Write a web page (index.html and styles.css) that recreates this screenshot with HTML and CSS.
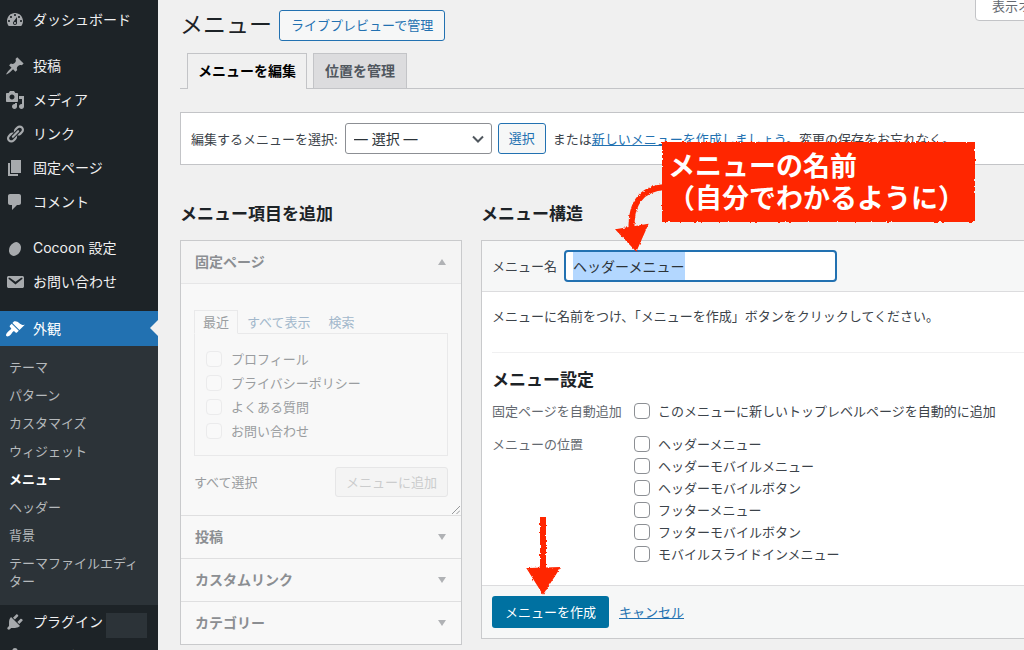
FILE: index.html
```html
<!DOCTYPE html>
<html lang="ja">
<head>
<meta charset="utf-8">
<title>メニュー</title>
<link rel="stylesheet" href="styles.css">
</head>
<body>
<div class="app">
  <nav class="sidebar" aria-label="管理メニュー">
    <a class="item" href="#"><svg class="icon" viewBox="0 0 20 20"><path fill-rule="evenodd" d="M3.76 16h12.48c1.1-1.37 1.76-3.11 1.76-5 0-4.42-3.58-8-8-8s-8 3.58-8 8c0 1.89.66 3.63 1.76 5zM10 4c.55 0 1 .45 1 1s-.45 1-1 1-1-.45-1-1 .45-1 1-1zM6 6c.55 0 1 .45 1 1s-.45 1-1 1-1-.45-1-1 .45-1 1-1zm8 0c.55 0 1 .45 1 1s-.45 1-1 1-1-.45-1-1 .45-1 1-1zm-5.37 5.55L12 7v6c0 1.1-.9 2-2 2s-2-.9-2-2c0-.57.24-1.08.63-1.45zM4 10c.55 0 1 .45 1 1s-.45 1-1 1-1-.45-1-1 .45-1 1-1zm12 0c.55 0 1 .45 1 1s-.45 1-1 1-1-.45-1-1 .45-1 1-1zm-5 3c0-.55-.45-1-1-1s-1 .45-1 1 .45 1 1 1 1-.45 1-1z"/></svg>ダッシュボード</a>
    <a class="item spaced" href="#"><svg class="icon" viewBox="0 0 20 20"><path d="M10.44 3.02l1.82-1.82 6.36 6.35-1.83 1.82c-1.05-.68-2.48-.57-3.41.36l-.75.75c-.92.93-1.04 2.35-.35 3.41l-1.83 1.82-2.41-2.41-2.8 2.79c-.42.42-3.38 2.71-3.8 2.29s1.86-3.39 2.28-3.81l2.79-2.79L4.1 9.36l1.83-1.82c1.05.69 2.48.57 3.4-.36l.75-.75c.93-.92 1.05-2.35.36-3.41z"/></svg>投稿</a>
    <a class="item" href="#"><svg class="icon" viewBox="0 0 20 20"><path fill-rule="evenodd" d="M13 11V4c0-.55-.45-1-1-1h-1.67L9 1H5L3.67 3H2c-.55 0-1 .45-1 1v7c0 .55.45 1 1 1h10c.55 0 1-.45 1-1zM7 4.5c1.38 0 2.5 1.12 2.5 2.5S8.38 9.5 7 9.5 4.5 8.38 4.5 7 5.62 4.5 7 4.5zM14 6h5v10.5c0 1.38-1.12 2.5-2.5 2.5S14 17.88 14 16.5s1.12-2.5 2.5-2.5c.17 0 .34.02.5.05V9h-3V6zm-4 8.05V13h2v3.5c0 1.38-1.12 2.5-2.5 2.5S7 17.88 7 16.5 8.12 14 9.5 14c.17 0 .34.02.5.05z"/></svg>メディア</a>
    <a class="item" href="#"><svg class="icon" viewBox="0 0 20 20"><path d="M17.74 2.76c1.68 1.69 1.68 4.41 0 6.1l-1.53 1.52c-1.12 1.12-2.7 1.47-4.14 1.09l2.62-2.61.76-.77.76-.76c.84-.84.84-2.2 0-3.04-.84-.85-2.2-.85-3.04 0l-.77.76-3.38 3.38c-.37-1.44-.02-3.02 1.1-4.14l1.52-1.53c1.69-1.68 4.42-1.68 6.1 0zM8.59 13.43l5.34-5.34c.42-.42.42-1.1 0-1.52-.44-.43-1.13-.39-1.53 0l-5.33 5.34c-.42.42-.42 1.1 0 1.52.44.43 1.13.39 1.52 0zm-.76 2.29l4.14-4.15c.38 1.44.03 3.02-1.09 4.14l-1.52 1.53c-1.69 1.68-4.41 1.68-6.1 0-1.68-1.68-1.68-4.42 0-6.1l1.53-1.52c1.12-1.12 2.7-1.47 4.14-1.1l-4.14 4.15c-.85.84-.85 2.2 0 3.05.84.84 2.2.84 3.04 0z"/></svg>リンク</a>
    <a class="item" href="#"><svg class="icon" viewBox="0 0 20 20"><path d="M6 15V2h10v13H6zm-1 1h8v2H3V5h2v11z"/></svg>固定ページ</a>
    <a class="item" href="#"><svg class="icon" viewBox="0 0 20 20"><path d="M5 2h9c1.1 0 2 .9 2 2v7c0 1.1-.9 2-2 2h-2l-5 5v-5H5c-1.1 0-2-.9-2-2V4c0-1.1.9-2 2-2z"/></svg>コメント</a>
    <a class="item spaced" href="#"><svg class="icon" viewBox="0 0 20 20"><ellipse cx="10" cy="11" rx="5.6" ry="7.2" transform="rotate(28 10 11)"/></svg>Cocoon 設定</a>
    <a class="item" href="#"><svg class="icon" viewBox="0 0 20 20"><path fill-rule="evenodd" d="M3.87 4h13.25C18.37 4 19 4.59 19 5.79v8.42c0 1.19-.63 1.79-1.88 1.79H3.87c-1.25 0-1.88-.6-1.88-1.79V5.79c0-1.2.63-1.79 1.88-1.79zm6.62 8.6l6.74-5.53c.24-.2.43-.66.13-1.07-.29-.41-.82-.42-1.17-.17l-5.7 3.86L4.8 5.83c-.35-.25-.88-.24-1.17.17-.3.41-.11.87.13 1.07z"/></svg>お問い合わせ</a>
    <a class="item spaced current" href="#"><svg class="icon" viewBox="0 0 20 20"><path d="M14.48 11.06L7.41 3.99l1.5-1.5c.5-.56 2.3-.47 3.51.32 1.21.8 1.43 1.28 2.91 2.1 1.18.64 2.45 1.26 4.45.85zm-.71.71L6.7 4.7 4.93 6.47c-.39.39-.39 1.02 0 1.41l1.06 1.06c.39.39.39 1.03 0 1.42-.6.6-1.43 1.11-2.21 1.69-.35.26-.7.53-1.01.84C1.43 14.23.4 16.08 1.4 17.07c.99 1 2.84-.03 4.18-1.36.31-.31.58-.66.85-1.02.57-.78 1.08-1.61 1.69-2.21.39-.39 1.02-.39 1.41 0l1.06 1.06c.39.39 1.02.39 1.41 0z"/></svg>外観</a>
    <div class="submenu">
      <a href="#">テーマ</a>
      <a href="#">パターン</a>
      <a href="#">カスタマイズ</a>
      <a href="#">ウィジェット</a>
      <a href="#" class="selected">メニュー</a>
      <a href="#">ヘッダー</a>
      <a href="#">背景</a>
      <a href="#">テーマファイルエディター</a>
    </div>
    <a class="item" href="#"><svg class="icon" viewBox="0 0 20 20"><path d="M13.11 4.36L9.87 7.6 8 5.73l3.24-3.24c.35-.34 1.05-.2 1.56.32.52.51.66 1.21.31 1.55zm-8 1.77l.91-1.12 9.01 9.01-1.19.84c-.71.71-2.63 1.16-3.82 1.16H6.14L4.9 17.26c-.59.59-1.54.59-2.12 0-.59-.58-.59-1.53 0-2.12l1.24-1.24v-3.88c0-1.13.4-3.19 1.09-3.89zm7.26 3.97l3.24-3.24c.34-.35 1.04-.21 1.55.31.52.51.66 1.21.31 1.55l-3.24 3.25z"/></svg>プラグイン<span class="count"></span></a>
    <a class="item" href="#"><svg class="icon" viewBox="0 0 20 20"><path d="M10 9.25c-2.27 0-2.73-3.44-2.73-3.44C7 4.02 7.82 2 9.97 2c2.16 0 2.98 2.02 2.71 3.81 0 0-.41 3.44-2.68 3.44zm0 2.57L12.72 10c2.39 0 4.52 2.33 4.52 4.53v2.49s-3.65 1.13-7.24 1.13c-3.65 0-7.24-1.13-7.24-1.13v-2.49c0-2.25 1.94-4.48 4.47-4.48z"/></svg>ユーザー</a>
  </nav>

  <main class="main">
    <button class="screen-options" type="button">表示オプション</button>
    <header class="title-row">
      <h1>メニュー</h1>
      <a class="button" href="#">ライブプレビューで管理</a>
    </header>
    <nav class="tabs" aria-label="表示の切り替え">
      <a class="tab active" href="#">メニューを編集</a>
      <a class="tab" href="#">位置を管理</a>
    </nav>

    <form class="manage">
      <label for="menu-select">編集するメニューを選択:</label>
      <div class="select-wrap">
        <select id="menu-select"><option>— 選択 —</option></select>
        <svg class="chevron" viewBox="0 0 12 8"><path d="M1 1.5l5 5 5-5"/></svg>
      </div>
      <button class="button" type="button">選択</button>
      <span class="hint">または<a href="#">新しいメニューを作成しましょう</a>。変更の保存をお忘れなく。</span>
    </form>

    <div class="columns">
      <section class="add">
        <h2>メニュー項目を追加</h2>
        <div class="accordion">
          <button class="acc-head open" type="button">固定ページ<svg viewBox="0 0 8 6"><path d="M4 0l4 6H0z"/></svg></button>
          <div class="acc-body">
            <div class="mini-tabs">
              <a class="on" href="#">最近</a><a href="#">すべて表示</a><a href="#">検索</a>
            </div>
            <div class="panel">
              <label><input type="checkbox" disabled>プロフィール</label>
              <label><input type="checkbox" disabled>プライバシーポリシー</label>
              <label><input type="checkbox" disabled>よくある質問</label>
              <label><input type="checkbox" disabled>お問い合わせ</label>
            </div>
            <div class="panel-foot">
              <span>すべて選択</span>
              <button type="button" disabled>メニューに追加</button>
            </div>
            <svg class="grip" viewBox="0 0 8 8"><path d="M0 8L8 0M4.5 8L8 4.5"/></svg>
          </div>
          <button class="acc-head" type="button">投稿<svg viewBox="0 0 8 6"><path d="M4 6L0 0h8z"/></svg></button>
          <button class="acc-head" type="button">カスタムリンク<svg viewBox="0 0 8 6"><path d="M4 6L0 0h8z"/></svg></button>
          <button class="acc-head" type="button">カテゴリー<svg viewBox="0 0 8 6"><path d="M4 6L0 0h8z"/></svg></button>
        </div>
      </section>

      <section class="structure">
        <h2>メニュー構造</h2>
        <form class="editor">
          <div class="editor-head">
            <label for="menu-name">メニュー名</label>
            <input id="menu-name" class="name" type="text" value="ヘッダーメニュー">
          </div>
          <div class="editor-body">
            <p>メニューに名前をつけ、「メニューを作成」ボタンをクリックしてください。</p>
            <div class="settings">
              <h2>メニュー設定</h2>
              <div class="setting">
                <span class="legend">固定ページを自動追加</span>
                <div class="checks"><label><input type="checkbox">このメニューに新しいトップレベルページを自動的に追加</label></div>
              </div>
              <div class="setting">
                <span class="legend">メニューの位置</span>
                <div class="checks">
                  <label><input type="checkbox">ヘッダーメニュー</label>
                  <label><input type="checkbox">ヘッダーモバイルメニュー</label>
                  <label><input type="checkbox">ヘッダーモバイルボタン</label>
                  <label><input type="checkbox">フッターメニュー</label>
                  <label><input type="checkbox">フッターモバイルボタン</label>
                  <label><input type="checkbox">モバイルスライドインメニュー</label>
                </div>
              </div>
            </div>
          </div>
          <div class="editor-foot">
            <button class="primary" type="button">メニューを作成</button>
            <a href="#">キャンセル</a>
          </div>
        </form>
      </section>
    </div>
  </main>

  <svg class="arrows" viewBox="0 0 1024 650" aria-hidden="true">
    <defs>
      <filter id="rough" x="-5%" y="-5%" width="110%" height="110%">
        <feTurbulence type="fractalNoise" baseFrequency="0.35" numOctaves="2" seed="4" result="n"/>
        <feDisplacementMap in="SourceGraphic" in2="n" scale="3" xChannelSelector="R" yChannelSelector="G"/>
      </filter>
    </defs>
    <g filter="url(#rough)">
      <path class="stroke" d="M666 187C640 188 629 205 632 236"/>
      <path class="head" d="M617 230L647 225L636 250Z"/>
      <path class="stroke" d="M543 517V572"/>
      <path class="head" d="M528 569L559 568L543 593Z"/>
    </g>
  </svg>
  <div class="callout"><span>メニューの名前<br>（自分でわかるように）</span></div>
</div>
</body>
</html>
```

FILE: styles.css
```css
* { box-sizing: border-box; }

body {
  margin: 0;
  background: #f0f0f0;
  color: #3c434a;
  font: 13px/18px Inter, "Noto Sans CJK JP", sans-serif;
}

a { color: #2271b1; }
button, input, select { font: inherit; color: inherit; }
h1, h2, p { margin: 0; }
h1 { font-size: 23px; line-height: 32px; font-weight: 400; color: #1d2327; }
h2 { font-size: 17px; line-height: 24px; font-weight: 700; color: #1d2327; }

.app {
  position: relative;
  display: flex;
  height: 100vh;
  overflow: hidden;
}

/* Sidebar */
.sidebar {
  flex: 0 0 158px;
  padding-top: 3px;
  background: #1d2327;
}
.item {
  position: relative;
  display: flex;
  align-items: center;
  gap: 8px;
  height: 34px;
  padding-left: 5px;
  color: #f0f0f1;
  font-size: 14px;
  text-decoration: none;
}
.item.spaced { margin-top: 12px; }
.icon { width: 20px; height: 20px; fill: #a7aaad; }
.item.current { height: 35px; background: #2271b1; color: #fff; }
.item.current .icon { fill: #fff; }
.item.current::after {
  content: "";
  position: absolute;
  right: 0;
  top: 9px;
  border: 8px solid transparent;
  border-left: 0;
  border-right-color: #f0f0f0;
}
.submenu { padding: 7px 0 10px; background: #2c3338; }
.submenu a {
  display: block;
  padding: 5px 16px 5px 9px;
  color: #b5b9bc;
  text-decoration: none;
}
.submenu .selected { color: #fff; font-weight: 700; }
.count { width: 41px; height: 25px; margin: 6px 0 0 -5px; background: #2c3338; }

/* Main column */
.main {
  position: relative;
  flex: 1;
  min-width: 0;
  padding: 9px 0 0 22px;
}
.screen-options {
  position: absolute;
  top: -9px;
  right: -76px;
  height: 30px;
  padding: 0 16px;
  border: 1px solid #c3c4c7;
  border-radius: 0 0 4px 4px;
  background: #fff;
  color: #646970;
}
.title-row { display: flex; align-items: center; gap: 7px; }
.button {
  height: 31px;
  padding: 0 10px;
  border: 1px solid #2271b1;
  border-radius: 3px;
  background: #f6f7f7;
  color: #2271b1;
  line-height: 29px;
  text-decoration: none;
}
.title-row .button { padding: 0 11px; }
.tabs {
  display: flex;
  gap: 6px;
  margin-top: 12px;
  padding-left: 7px;
  border-bottom: 1px solid #c3c4c7;
}
.tab {
  padding: 5px 11px;
  border: 1px solid #c3c4c7;
  border-bottom: 0;
  background: #dcdcde;
  color: #50575e;
  font-size: 14px;
  line-height: 24px;
  font-weight: 700;
  text-decoration: none;
}
.tab.active { margin-bottom: -1px; padding: 5px 10px 6px; background: #f0f0f0; color: #000; }

.manage {
  display: flex;
  align-items: center;
  margin-top: 23px;
  height: 53px;
  padding-left: 10px;
  border: 1px solid #c3c4c7;
  border-right: 0;
  background: #fff;
  white-space: nowrap;
}
.select-wrap { position: relative; margin: 0 6px 0 7px; }
.select-wrap select {
  appearance: none;
  width: 147px;
  height: 31px;
  padding: 0 24px 0 8px;
  border: 1px solid #8c8f94;
  border-radius: 3px;
  background: #fff;
  color: #2c3338;
  font-size: 14px;
}
.chevron {
  position: absolute;
  right: 8px;
  top: 12px;
  width: 12px;
  height: 8px;
  fill: none;
  stroke: #50575e;
  stroke-width: 2;
  pointer-events: none;
}
.hint { margin-left: 7px; }

.columns {
  display: grid;
  grid-template-columns: 282px 1fr;
  gap: 19px;
  margin-top: 37px;
}
.columns section > h2 { margin-bottom: 14px; }

/* Accordion of items that can be added */
.accordion {
  border: 1px solid #c9cacc;
  background: #f8f8f8;
  color: #9a9da0;
}
.acc-head {
  display: flex;
  align-items: center;
  justify-content: space-between;
  width: 100%;
  height: 43px;
  padding: 0 15px 0 14px;
  border: 0;
  border-top: 1px solid #dfdfe0;
  background: none;
  color: #8b8e92;
  font-size: 14px;
  font-weight: 700;
}
.acc-head.open {
  border-top: 0;
  border-bottom: 1px solid #e6e6e7;
  background: #f4f4f4;
}
.acc-head svg { width: 8px; height: 6px; fill: #b0b2b5; }
.acc-body { position: relative; padding: 26px 13px 18px; }
.mini-tabs { display: flex; margin-bottom: -1px; }
.mini-tabs a {
  padding: 2px 8px;
  border: 1px solid transparent;
  color: #a3b8cc;
  text-decoration: none;
}
.mini-tabs a.on {
  border-color: #e9e9ea;
  border-bottom-color: #f8f8f8;
  background: #f8f8f8;
  color: #9a9da0;
  position: relative;
}
.panel {
  padding: 13px 11px 12px;
  border: 1px solid #e9e9ea;
}
.panel label { display: flex; align-items: center; gap: 9px; height: 24px; }
.panel-foot {
  display: flex;
  align-items: center;
  justify-content: space-between;
  margin-top: 11px;
}
.panel-foot button {
  height: 30px;
  padding: 0 10px;
  border: 1px solid #e6e6e7;
  border-radius: 3px;
  background: #f4f4f4;
  color: #cbcccd;
}
.grip {
  position: absolute;
  right: 1px;
  bottom: 1px;
  width: 8px;
  height: 8px;
  stroke: #97999b;
  stroke-width: 1;
}

input[type="checkbox"] {
  appearance: none;
  flex: none;
  width: 16px;
  height: 16px;
  margin: 0;
  border: 1px solid #8c8f94;
  border-radius: 4px;
  background: #fff;
}
.panel input[type="checkbox"] { border-color: #ebebec; background: #f9f9f9; }

/* Menu editor */
.editor {
  border: 1px solid #c9cacc;
  border-right: 0;
  background: #fff;
}
.editor-head, .editor-foot {
  display: flex;
  align-items: center;
  gap: 7px;
  height: 51px;
  padding-left: 10px;
  background: #f6f7f7;
}
.editor-head { border-bottom: 1px solid #dcdcde; }
.name {
  width: 273px;
  height: 32px;
  padding: 0 7px;
  border: 2px solid #2271b1;
  border-radius: 4px;
  outline: 0;
  background: #fff linear-gradient(#b3d7ff, #b3d7ff) 7px 0 / 112px 100% no-repeat;
  color: #2c3338;
  font-size: 14px;
}
.editor-body { padding: 15px 0 20px 10px; }
.settings {
  margin-top: 27px;
  padding-top: 15px;
  border-top: 1px solid #f0f0f1;
}
.setting { display: flex; gap: 12px; margin-top: 8px; }
.legend { width: 130px; line-height: 22px; color: #646970; }
.checks label { display: flex; align-items: center; gap: 8px; height: 22px; }
.setting + .setting { margin-top: 11px; }
.editor-foot { gap: 10px; height: 53px; border-top: 1px solid #dcdcde; }
.primary {
  height: 32px;
  padding: 0 13px;
  border: 0;
  border-radius: 3px;
  background: #0071a1;
  color: #fff;
}

/* Hand-drawn annotations over the screen */
.arrows {
  position: absolute;
  left: 0;
  top: 0;
  width: 1024px;
  height: 650px;
  pointer-events: none;
}
.stroke { fill: none; stroke: #ff2600; stroke-width: 6; }
.head { fill: #ff2600; stroke: #ff2600; stroke-width: 2; }
.callout {
  position: absolute;
  left: 662px;
  top: 142px;
  padding: 9px 10px 7px 6px;
  color: #fff;
  font-size: 27px;
  line-height: 32px;
  font-weight: 700;
  white-space: nowrap;
}
.callout::before {
  content: "";
  position: absolute;
  inset: 0;
  background: #ff2600;
  filter: url(#rough);
}
.callout span { position: relative; }
```
